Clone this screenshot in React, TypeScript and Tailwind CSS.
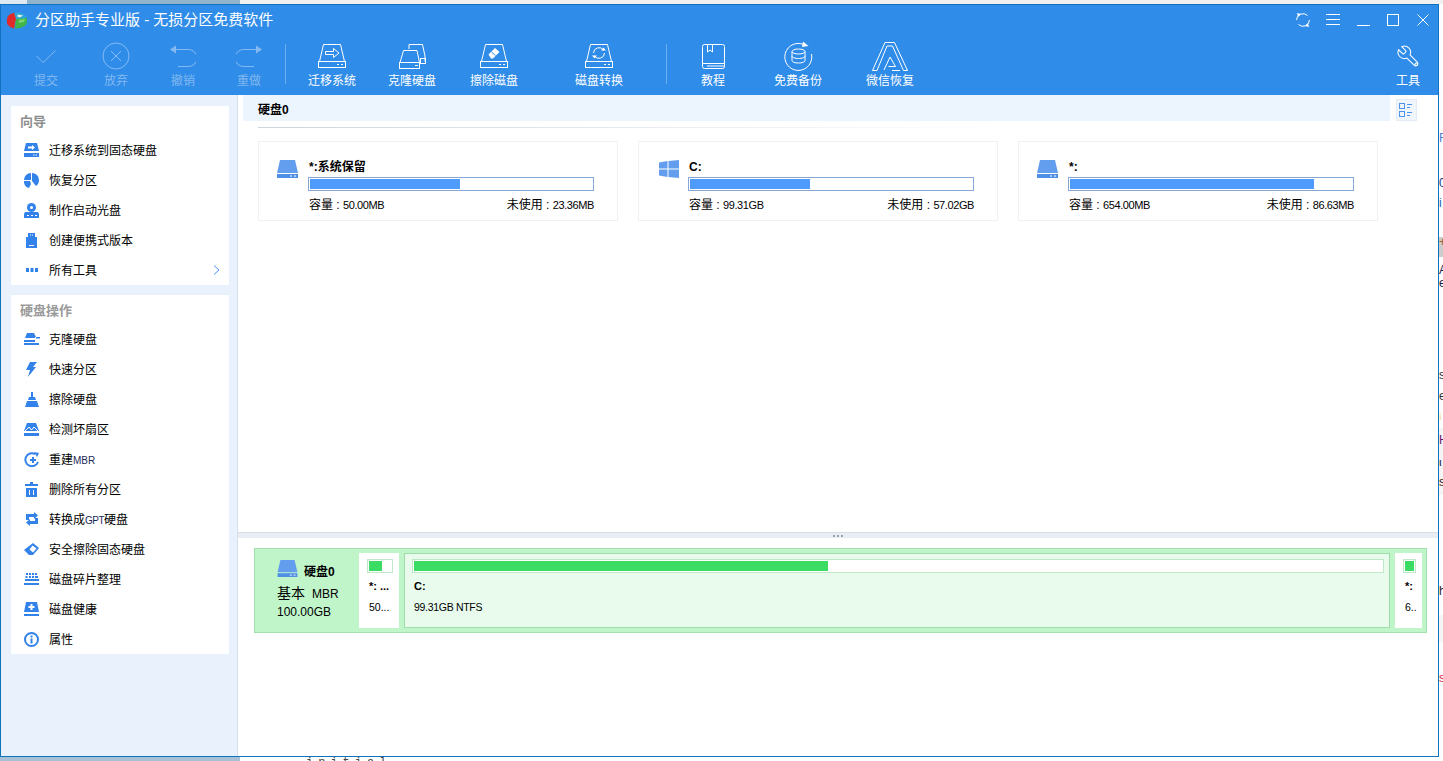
import React from 'react';

const CJK = '"Liberation Sans","Noto Sans CJK SC",sans-serif';

// ---- icons ----
const Svg = ({ w, h, children, className = '' }: { w: number; h: number; children: React.ReactNode; className?: string }) => (
  <svg width={w} height={h} viewBox={`0 0 ${w} ${h}`} fill="none" className={className}>{children}</svg>
);

const Logo = () => (
  <Svg w={20} h={17}>
    <ellipse cx="10" cy="7" rx="10" ry="6.500" fill="#2fa6d8" />
    <path d="M0 7c0-3 3-5.500 7-6.300L9 7l-2 9.500-4-1.500-3-3z" fill="#e02a2a" />
    <path d="M9 7l11-1v4c0 3.500-5 6.500-12 6.500z" fill="#3fb54a" />
    <path d="M11 2.500l5 1-3 2-3-1z" fill="#d8f3e0" />
    <path d="M12 8l6-1-1 3-5 1z" fill="#7ed56f" />
  </Svg>
);

const stroke = { stroke: '#fff', strokeWidth: 1 };
const dimStroke = { stroke: '#fff', strokeOpacity: 0.4, strokeWidth: 1 };

const HddBase = ({ children }: { children?: React.ReactNode }) => (
  <Svg w={28} h={26}>
    <path d="M5.500 1.500H22.500L26.500 18.500H1.500z" {...stroke} />
    <rect x="0.500" y="18.500" width="27" height="6" {...stroke} />
    <path d="M19 21.500h2M23 21.500h2" {...stroke} />
    {children}
  </Svg>
);

const ToolbarIcons: Record<string, React.ReactNode> = {
  check: <Svg w={20} h={13}><path d="M.5 6l6.500 6.500L19.500.5" {...dimStroke} /></Svg>,
  cancel: (
    <Svg w={28} h={28}>
      <circle cx="14" cy="14" r="13" {...dimStroke} />
      <path d="M9 9l10 10M19 9L9 19" {...dimStroke} />
    </Svg>
  ),
  undo: (
    <Svg w={26} h={22}>
      <path d="M6 .5v8L0 4.500z" fill="#fff" fillOpacity={0.4} />
      <path d="M6 4.500h12.500a8 8 0 0 1 0 17H8" {...dimStroke} />
    </Svg>
  ),
  redo: (
    <Svg w={26} h={22}>
      <path d="M20 .5v8l6-4z" fill="#fff" fillOpacity={0.4} />
      <path d="M20 4.500H7.500a8 8 0 0 0 0 17H18" {...dimStroke} />
    </Svg>
  ),
  migrate: <HddBase><path d="M7.500 8.500h8v-3l5.500 4.500-5.500 4.500v-3h-8z" {...stroke} /></HddBase>,
  clone: (
    <Svg w={27} h={25}>
      <path d="M10 5V.5h13.500L26 12v5.500" {...stroke} />
      <path d="M4.500 6.500H18L20.500 18.500H1z" {...stroke} />
      <rect x="0.500" y="18.500" width="20" height="6" {...stroke} />
      <rect x="21.500" y="14.500" width="5" height="5" {...stroke} />
      <path d="M16 21.500h3" {...stroke} />
    </Svg>
  ),
  wipe: (
    <HddBase>
      <path d="M8.500 11.500l6.500-6.500 4.500 4-6.500 6.500h-2z" fill="#fff" />
      <path d="M11.500 9l4 3.500" stroke="#2f8ce8" />
    </HddBase>
  ),
  convert: (
    <HddBase>
      <path d="M8.500 10a5.500 5.500 0 0 1 10-3M19.500 10a5.500 5.500 0 0 1-10 3" {...stroke} />
      <path d="M16 7.500h5l-2.500-3zM7 12.500h5l-2.500 3z" fill="#fff" />
    </HddBase>
  ),
  book: (
    <Svg w={23} h={25}>
      <rect x=".5" y=".5" width="22" height="24" rx="2" {...stroke} />
      <path d="M.5 19.500h22M5 22h17.500" {...stroke} />
      <path d="M5.500 1v7l2.500-2 2.500 2V1" {...stroke} />
    </Svg>
  ),
  backup: (
    <Svg w={29} h={30}>
      <path d="M21 4.200A13.500 13.500 0 1 0 27.500 13" {...stroke} />
      <path d="M19 .5l5.500 4.500-6.500 1z" fill="#fff" />
      <ellipse cx="14.500" cy="10.500" rx="6.500" ry="2.500" {...stroke} />
      <path d="M8 10.500v9c0 1.500 3 2.500 6.500 2.500s6.500-1 6.500-2.500v-9M8 15c0 1.500 3 2.500 6.500 2.500S21 16.500 21 15" {...stroke} />
    </Svg>
  ),
  wechat: (
    <Svg w={36} h={29}>
      <path d="M.5 28.500L13 .5h9.500L35.500 28.500h-4L20.500 4H15L5 28.500z" {...stroke} />
      <path d="M12 28l6-13 5.500 9.500H16.500" {...stroke} />
      <path d="M20 28.500h8" {...stroke} />
    </Svg>
  ),
  tools: (
    <svg width="25" height="25" viewBox="0 0 24 24" fill="none" stroke="#fff" strokeWidth={1}>
      <g transform="translate(24 0) scale(-1 1)">
        <path d="M14.700 6.300a1 1 0 0 0 0 1.400l1.600 1.600a1 1 0 0 0 1.400 0l3.770-3.770a6 6 0 0 1-7.940 7.940l-6.910 6.910a2.120 2.120 0 0 1-3-3l6.910-6.910a6 6 0 0 1 7.940-7.940l-3.760 3.760z" />
      </g>
      <circle cx="19.500" cy="19.500" r="1.200" />
    </svg>
  ),
};

const ToolButton = ({ icon, label, dim, x }: { icon: string; label: string; dim?: boolean; x: string }) => (
  <div className={`flex flex-col items-center shrink-0 pt-[5px] ${x}`}>
    <div className="h-[32px] flex items-center justify-center">{ToolbarIcons[icon]}</div>
    <span className={`text-[12px] leading-[14px] mt-[2px] whitespace-nowrap ${dim ? 'text-white/40' : 'text-white'}`}>{label}</span>
  </div>
);

const Divider = ({ x }: { x: string }) => <div className={`w-px h-10 bg-white/30 shrink-0 ${x}`} />;

// ---- sidebar icons (solid blue) ----
const B = '#3282ea';
const SideIcons: Record<string, React.ReactNode> = {
  migrate: <Svg w={15} h={14}><path d="M2 0h11l2 8H0z M0 10h15v4H0z" fill={B} /><path d="M4 3.500h4V2l3 2.500L8 7V5.500H4z" fill="#fff" /><path d="M9 12h1.500M11.500 12H13" stroke="#fff" /></Svg>,
  recover: <Svg w={15} h={15}><path d="M7 0v7H0a7 7 0 0 1 7-7z M8 0a7 7 0 0 1 7 7 7 7 0 0 1-3 6L8 8z M0 8h6l1 3-2 4a7 7 0 0 1-5-7z" fill={B} /></Svg>,
  boot: <Svg w={15} h={15}><circle cx="7.500" cy="4.500" r="4.500" fill={B} /><circle cx="7.500" cy="4.500" r="1.500" fill="#fff" /><path d="M1 9h13l1 2v4H0v-4z" fill={B} /><path d="M3 12.500h2M7 12.500h2M11 12.500h2" stroke="#fff" /></Svg>,
  usb: <Svg w={11} h={15}><rect x="2" y="0" width="7" height="4" fill={B} /><rect x="0" y="4" width="11" height="11" fill={B} /><path d="M3 12.500h5M4 2h1M6 2h1" stroke="#fff" /></Svg>,
  dots: <Svg w={12} h={4}><path d="M0 0h3v4H0zM4.500 0h3v4h-3zM9 0h3v4H9z" fill={B} /></Svg>,
  clone: <Svg w={16} h={12}><path d="M3 0h7l2 4H11v1H1z M0 7h11v2H0z M0 10h15v2H0z M12 4h4v1.500h-4z" fill={B} /></Svg>,
  quick: <Svg w={11} h={15}><path d="M4 0h7L7 5h3L2 15l2-7H0z" fill={B} /></Svg>,
  wipe: <Svg w={14} h={15}><path d="M6 0h2v5h2l1 3H3l1-3h2z M2 9h10l2 6H0z" fill={B} /></Svg>,
  bad: <Svg w={15} h={13}><path d="M3 0h9l3 8H0z" fill={B} /><path d="M1 8l4-4 2.500 3L10 4l4 4" stroke="#fff" /><rect y="10" width="15" height="3" fill={B} /></Svg>,
  rebuild: <Svg w={15} h={15}><path d="M11 2a6.500 6.500 0 1 0 3 8" stroke={B} strokeWidth={2} /><path d="M10 0l5 1-2 4z M6 7h2V5h2v2h2v2h-2v2H8V9H6z" fill={B} /></Svg>,
  trash: <Svg w={13} h={15}><path d="M5 0h3v2h5v2H0V2h5z M1 6h11v9H1z" fill={B} /><path d="M4.500 8v5M8.500 8v5" stroke="#fff" /></Svg>,
  convert: <Svg w={12} h={14}><path d="M0 2h8V0l4 3.500L8 7V5H3v3H0z M12 6v6H4v2L0 10.500 4 7v2h5V6z" fill={B} /></Svg>,
  erase: <Svg w={15} h={12}><path d="M9 0l6 5-6 7H5L0 7z" fill={B} /><path d="M8.500 2.500L12.500 5.500 9 9.500 5.500 6.500z" fill="#fff" /></Svg>,
  defrag: <Svg w={15} h={12}><path d="M2 0h2v2H2zM5 0h2v2H5zM8 0h2v2H8zM11 0h2v2h-2zM1.500 3h2v2h-2zM5 3h2v2H5zM8 3h2v2H8zM11 3h3v2h-3zM1 6h14v2H1z M0 10h15v2H0z" fill={B} /></Svg>,
  health: <Svg w={15} h={14}><path d="M2 0h11l2 10H0z M0 12h15v2H0z" fill={B} /><path d="M6.500 2h2v2h2v2h-2v2h-2V6h-2V4h2z" fill="#fff" /></Svg>,
  info: <Svg w={15} h={15}><circle cx="7.500" cy="7.500" r="6.500" stroke={B} strokeWidth={2} /><path d="M6.500 3.500h2v2h-2z M6.500 6.500h2v5h-2z" fill={B} /></Svg>,
};

const NavRow = ({ icon, children, chevron }: { icon: string; children: React.ReactNode; chevron?: boolean }) => (
  <div className="h-[30px] flex items-center">
    <span className="w-[38px] pl-[12px] pr-[9px] shrink-0 flex justify-center">{SideIcons[icon]}</span>
    <span className="text-[12px] mt-[2px] text-black whitespace-nowrap">{children}</span>
    {chevron && (
      <svg width="8" height="12" viewBox="0 0 8 12" fill="none" className="ml-auto mr-[8px]"><path d="M1 1.500l5 4.500-5 4.500" stroke="#4a93ee" /></svg>
    )}
  </div>
);

const Small = ({ children, tight }: { children: string; tight?: boolean }) => (
  <span className={`text-[10px] text-[#1a2a55] ${tight ? 'tracking-[-0.5px]' : ''}`}>{children}</span>
);

const guide: [string, React.ReactNode][] = [
  ['migrate', '迁移系统到固态硬盘'],
  ['recover', '恢复分区'],
  ['boot', '制作启动光盘'],
  ['usb', '创建便携式版本'],
];

const diskOps: [string, React.ReactNode][] = [
  ['clone', '克隆硬盘'],
  ['quick', '快速分区'],
  ['wipe', '擦除硬盘'],
  ['bad', '检测坏扇区'],
  ['rebuild', <>重建<Small>MBR</Small></>],
  ['trash', '删除所有分区'],
  ['convert', <>转换成<Small tight>GPT</Small>硬盘</>],
  ['erase', '安全擦除固态硬盘'],
  ['defrag', '磁盘碎片整理'],
  ['health', '磁盘健康'],
  ['info', '属性'],
];

const DiskGlyph = ({ w = 21, h = 18 }: { w?: number; h?: number }) => (
  <svg width={w} height={h} viewBox="0 0 21 18" fill="none">
    <path d="M3 0h15l3 13H0z" fill="#639eee" />
    <rect y="14" width="21" height="4" fill="#4f8fe8" />
    <path d="M13 16h2M17 16h2" stroke="#fff" />
  </svg>
);

const WinGlyph = () => (
  <svg width="20" height="18" viewBox="0 0 20 18" fill="none" className="ml-[2px]">
    <path d="M0 2.500l8.500-1.500v7.500H0z M9.500 1L20 0v8.500H9.500z M0 9.500h8.500V17L0 15.500z M9.500 9.500H20V18L9.500 17z" fill="#639eee" />
  </svg>
);

const Num = ({ children }: { children: string }) => <span className="text-[11px] tracking-[-0.4px]">{children}</span>;

const PartCard = ({ glyph, name, pct, cap, free, last }: { glyph: React.ReactNode; name: string; pct: number; cap: string; free: string; last?: boolean }) => (
  <div className={`w-[360px] h-[80px] border border-[#f1f1f1] shrink-0 flex ${last ? '' : 'mr-[20px]'}`}>
    <div className="w-[49px] pl-[18px] pt-[18px] shrink-0">{glyph}</div>
    <div className="w-[286px]">
      <div className="h-[35px] pt-[17px] pl-px text-[12px] leading-[16px] font-bold text-black whitespace-nowrap">{name}</div>
      <div className="h-[14px] border border-[#86a7d8] p-px">
        <div className="h-full bg-[#4e9bfb]" style={{ width: `${pct}%` }} />
      </div>
      <div className="flex justify-between mt-[6px] pl-px text-[12px] leading-[16px] text-black whitespace-nowrap">
        <span>容量 : <Num>{cap}</Num></span>
        <span>未使用 : <Num>{free}</Num></span>
      </div>
    </div>
  </div>
);

const GREEN = 'bg-[#3adc63]';

// slivers of the window behind, seen to the right of ours
const behind = [
  { c: 'h-[129px]', t: '' },
  { c: 'h-[12px] text-[#4a7fd0]', t: 'F' },
  { c: 'h-[33px]', t: '' },
  { c: 'h-[10px] text-[#1a3a7a]', t: '0' },
  { c: 'h-[10px]', t: '' },
  { c: 'h-[10px] text-[#1a5fb0]', t: 'i' },
  { c: 'h-[29px]', t: '' },
  { c: 'h-[20px] bg-[#cccccc] text-[#a0622a]', t: '+' },
  { c: 'h-[8px]', t: '' },
  { c: 'h-[10px] text-[#222244]', t: 'A' },
  { c: 'h-[3px]', t: '' },
  { c: 'h-[10px] text-[#222244]', t: 'e' },
  { c: 'h-[82px]', t: '' },
  { c: 'h-[9px] text-[#333333]', t: 's' },
  { c: 'h-[12px]', t: '' },
  { c: 'h-[10px] text-[#333333]', t: 'e' },
  { c: 'h-[12px]', t: '' },
  { c: 'h-[7px] text-[#f0dc90]', t: 'i' },
  { c: 'h-[8px]', t: '' },
  { c: 'h-[7px] bg-[#f5f5f5]', t: '' },
  { c: 'h-[10px] bg-[#f5f5f5] text-[#6a1a6a]', t: 'H' },
  { c: 'h-[13px] bg-[#f5f5f5]', t: '' },
  { c: 'h-[8px] bg-[#f5f5f5] text-[#222244]', t: 'u' },
  { c: 'h-[11px] bg-[#f5f5f5]', t: '' },
  { c: 'h-[11px] bg-[#f5f5f5] text-[#442211]', t: 's' },
  { c: 'h-[7px] bg-[#f5f5f5]', t: '' },
  { c: 'h-[91px]', t: '' },
  { c: 'h-[10px] text-[#332222]', t: 'h' },
  { c: 'h-[19px]', t: '' },
  { c: 'h-[27px] bg-[#f5f5f5]', t: '' },
  { c: 'h-[31px]', t: '' },
  { c: 'h-[10px] text-[#e02a4a]', t: 's' },
];

const App = () => (
  <div className="w-[1443px] h-[761px] overflow-hidden flex flex-col bg-white" style={{ fontFamily: CJK }}>
    {/* strip of the desktop above the window */}
    <div className="h-[4px] shrink-0 flex">
      <div className="w-[27px] bg-[#dfe9f2]" />
      <div className="w-[213px] bg-[#8fb4cc]" />
      <div className="flex-1 bg-[#f0f0f0]" />
    </div>

    <div className="flex-1 min-h-0 flex">
      <div className="w-[1439px] shrink-0 flex flex-col border border-[#0f72bf] bg-white">
        {/* title bar + toolbar */}
        <div className="h-[90px] shrink-0 bg-[#2f8ce8] flex flex-col">
          <div className="h-[30px] flex items-center shrink-0">
            <span className="ml-[6px] mr-[8px] shrink-0 flex"><Logo /></span>
            <span className="text-[15px] text-white whitespace-nowrap">分区助手专业版 - 无损分区免费软件</span>
            <div className="ml-auto flex items-center">
              <svg width="16" height="16" viewBox="0 0 16 16" fill="none" className="mr-[15px]">
                <path d="M1.500 8a6.500 6.500 0 0 1 11-4.500M14.500 8a6.500 6.500 0 0 1-11 4.500" stroke="#fff" />
                <path d="M2 1l4 1-3 3zM14 15l-4-1 3-3z" fill="#fff" />
              </svg>
              <svg width="14" height="12" viewBox="0 0 14 12" fill="none" className="mr-[17px]"><path d="M0 .5h14M0 5.500h14M0 10.500h14" stroke="#fff" /></svg>
              <svg width="13" height="12" viewBox="0 0 13 12" fill="none" className="mr-[17px]"><path d="M0 11.500h13" stroke="#fff" /></svg>
              <svg width="12" height="12" viewBox="0 0 12 12" fill="none" className="mr-[18px]"><rect x=".5" y=".5" width="11" height="11" stroke="#fff" /></svg>
              <svg width="12" height="12" viewBox="0 0 12 12" fill="none" className="mr-[9px]"><path d="M.5.500l11 11M11.500.500l-11 11" stroke="#fff" /></svg>
            </div>
          </div>
          <div className="flex-1 flex items-start">
            <ToolButton icon="check" label="提交" dim x="ml-[32px] w-[26px]" />
            <ToolButton icon="cancel" label="放弃" dim x="ml-[44px] w-[26px]" />
            <ToolButton icon="undo" label="撤销" dim x="ml-[41px] w-[26px]" />
            <ToolButton icon="redo" label="重做" dim x="ml-[40px] w-[26px]" />
            <Divider x="ml-[23px] mt-[9px]" />
            <ToolButton icon="migrate" label="迁移系统" x="ml-[21px] w-[50px]" />
            <ToolButton icon="clone" label="克隆硬盘" x="ml-[30px] w-[50px]" />
            <ToolButton icon="wipe" label="擦除磁盘" x="ml-[32px] w-[50px]" />
            <ToolButton icon="convert" label="磁盘转换" x="ml-[55px] w-[50px]" />
            <Divider x="ml-[42px] mt-[9px]" />
            <ToolButton icon="book" label="教程" x="ml-[33px] w-[26px]" />
            <ToolButton icon="backup" label="免费备份" x="ml-[47px] w-[50px]" />
            <ToolButton icon="wechat" label="微信恢复" x="ml-[42px] w-[50px]" />
            <ToolButton icon="tools" label="工具" x="ml-auto mr-[17px] w-[26px]" />
          </div>
        </div>

        <div className="flex-1 min-h-0 flex">
          {/* sidebar */}
          <div className="w-[237px] shrink-0 bg-[#e9f1fd] border-r border-[#d5dfee] pt-[11px] pl-[10px] pr-[8px] flex flex-col gap-[10px]">
            <div className="bg-white">
              <div className="h-[29px] pl-[9px] pt-[2px] flex items-center text-[13px] font-bold text-[#8e8e8e]">向导</div>
              {guide.map(([i, t]) => <NavRow key={i} icon={i}>{t}</NavRow>)}
              <NavRow icon="dots" chevron>所有工具</NavRow>
            </div>
            <div className="bg-white">
              <div className="h-[29px] pl-[9px] pt-[2px] flex items-center text-[13px] font-bold text-[#9a9a9a]">硬盘操作</div>
              {diskOps.map(([i, t]) => <NavRow key={i} icon={i}>{t}</NavRow>)}
            </div>
          </div>

          {/* main */}
          <div className="flex-1 min-w-0 flex flex-col">
            <div className="h-[437px] shrink-0 pl-[5px]">
              <div className="flex h-[26px]">
                <div className="w-[1147px] bg-[#ecf4fe] pl-[15px] pt-[2px] text-[12px] leading-[26px] font-bold text-black">硬盘0</div>
                <div className="ml-[6px] mt-[4px] w-[21px] h-[22px] bg-[#f0f5fc] border border-[#e4ebf5] flex items-center justify-center">
                  <svg width="15" height="15" viewBox="0 0 15 15" fill="none">
                    <rect x=".5" y=".5" width="5" height="5" stroke="#4f93ee" />
                    <rect x=".5" y="8.500" width="5" height="5" stroke="#4f93ee" />
                    <path d="M8 1.500h5M8 4.500h3M8 9.500h5M8 12.500h3" stroke="#4f93ee" />
                  </svg>
                </div>
              </div>
              <div className="ml-[15px] mt-[6px] w-[740px] h-px bg-linear-to-r from-[#cfd5de] to-white" />
              <div className="flex ml-[15px] mt-[13px]">
                <PartCard glyph={<DiskGlyph />} name="*:系统保留" pct={53.200} cap="50.00MB" free="23.36MB" />
                <PartCard glyph={<WinGlyph />} name="C:" pct={42.500} cap="99.31GB" free="57.02GB" />
                <PartCard glyph={<DiskGlyph />} name="*:" pct={86.500} cap="654.00MB" free="86.63MB" last />
              </div>
            </div>

            {/* splitter */}
            <div className="h-[6px] shrink-0 bg-[#e9eef5] border-t border-[#d8dfe9] flex items-center justify-center gap-[2px]">
              <span className="w-[2px] h-[2px] bg-[#9aa3ae]" />
              <span className="w-[2px] h-[2px] bg-[#9aa3ae]" />
              <span className="w-[2px] h-[2px] bg-[#9aa3ae]" />
            </div>

            {/* disk map */}
            <div className="pl-[16px] pt-[10px]">
              <div className="w-[1173px] h-[85px] bg-[#bff5c9] border border-[#a4dfb0] flex pl-[104px] pt-[4px] relative">
                <div className="absolute left-[22px] top-[11px] w-[80px]">
                  <div className="flex items-start gap-[6px]">
                    <DiskGlyph w={21} h={17} />
                    <span className="text-[12px] leading-[16px] mt-[4px] font-bold text-black">硬盘0</span>
                  </div>
                  <div className="leading-[18px] mt-[4px] text-black whitespace-nowrap">
                    <span className="text-[14px]">基本</span>
                    <span className="text-[12px] ml-[7px]">MBR</span>
                  </div>
                  <div className="text-[12px] leading-[18px] text-black">100.00GB</div>
                </div>
                <div className="w-[40px] h-[75px] bg-white shrink-0 pt-[6px] pl-[8px]">
                  <div className="w-[26px] h-[14px] border border-[#bfe8c8] p-px"><div className={`h-full w-[59%] ${GREEN}`} /></div>
                  <div className="text-[11px] leading-[14px] font-bold mt-[6px] ml-[2px] text-black">*: ...</div>
                  <div className="text-[10.5px] leading-[14px] mt-[7px] ml-[2px] text-black">50...</div>
                </div>
                <div className="ml-[5px] w-[986px] h-[75px] bg-[#e8fbec] border border-[#a0dcac] shrink-0 pt-[5px] px-[7px]">
                  <div className="w-[972px] h-[14px] bg-white border border-[#bfe8c8] p-px"><div className={`h-full w-[42.800%] ${GREEN}`} /></div>
                  <div className="text-[11px] leading-[14px] font-bold mt-[6px] ml-[2px] text-black">C:</div>
                  <div className="text-[10.5px] tracking-[-0.3px] leading-[14px] mt-[7px] ml-[2px] text-black">99.31GB NTFS</div>
                </div>
                <div className="ml-[5px] w-[27px] h-[75px] bg-white shrink-0 pt-[6px] pl-[8px]">
                  <div className="w-[13px] h-[14px] border border-[#bfe8c8] p-px"><div className={`h-full w-full ${GREEN}`} /></div>
                  <div className="text-[11px] leading-[14px] font-bold mt-[6px] ml-[2px] text-black">*:</div>
                  <div className="text-[10.5px] leading-[14px] mt-[7px] ml-[2px] text-black">6..</div>
                </div>
              </div>
            </div>
          </div>
        </div>
      </div>
      {/* what shows of the page behind the window */}
      <div className="flex-1 flex flex-col overflow-hidden bg-white">
        {behind.map((b, i) => (
          <div key={i} className={`shrink-0 overflow-hidden text-[12px] leading-[10px] ${b.c}`}>{b.t}</div>
        ))}
      </div>
    </div>

    <div className="h-[4px] shrink-0 flex overflow-hidden">
      <div className="w-[240px] bg-[#a8c0d4]" />
      <div className="flex-1 bg-white pl-[66px] text-[12px] leading-[12px] tracking-[5px] text-[#444444] whitespace-nowrap" style={{ fontFamily: '"Liberation Mono",monospace' }}>initial</div>
    </div>
  </div>
);

export default App;
